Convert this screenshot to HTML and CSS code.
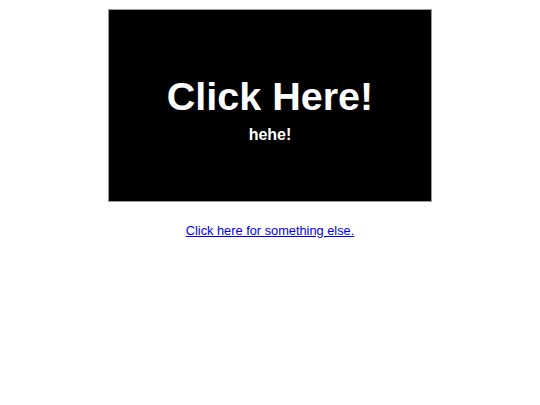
FILE: index.html
```html
<!DOCTYPE html>
<html>
<head>
<meta charset="utf-8">
<link rel="stylesheet" href="styles.css">
</head>
<body>
<main class="page">
  <section class="banner">
    <h1 class="banner-title">Click Here!</h1>
    <p class="banner-sub">hehe!</p>
  </section>
  <p class="more"><a class="more-link" href="#">Click here for something else.</a></p>
</main>
</body>
</html>
```
FILE: styles.css
```css
html, body {
  margin: 0;
  padding: 0;
  background: #ffffff;
}
body {
  font-family: "Liberation Sans", Arial, sans-serif;
}
.page {
  display: flex;
  flex-direction: column;
  align-items: center;
  padding-top: 9px;
}
.banner {
  box-sizing: border-box;
  width: 324px;
  height: 193px;
  background: #000000;
  border: 1px solid #9a9a9a;
  display: flex;
  flex-direction: column;
  align-items: center;
  justify-content: center;
  color: #ffffff;
}
.banner-title {
  margin: 6px 0 0 0;
  font-size: 39.5px;
  font-weight: bold;
  line-height: 46px;
}
.banner-sub {
  margin: 7px 0 0 0;
  font-size: 16px;
  font-weight: bold;
  line-height: 18px;
}
.more {
  margin: 21px 0 0 0;
  font-size: 12.8px;
  line-height: 15px;
}
.more-link {
  color: #0000ee;
  text-decoration: underline;
}
```
